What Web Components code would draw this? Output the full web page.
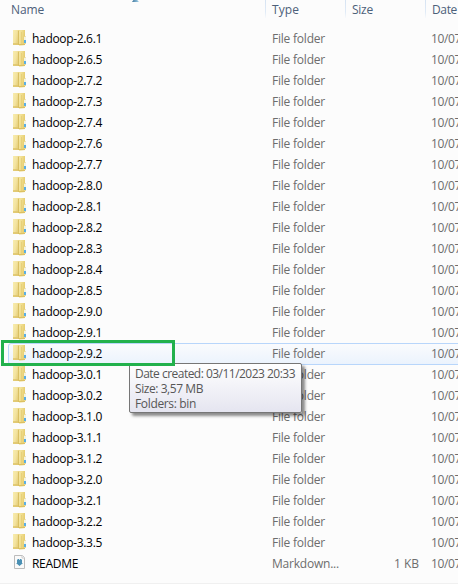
<!DOCTYPE html>
<html lang="en">
<head>
<meta charset="utf-8">
<title>Files</title>
<style>
html,body{margin:0;height:584px;overflow:hidden;background:#fcfcfc}
</style>
</head>
<body>
<file-explorer></file-explorer>
<script>
const make = (host, html) => {
  const t = document.createElement('template');
  t.innerHTML = html;
  host.attachShadow({mode:'open'}).append(t.content.cloneNode(true));
};

/* Text whose tracking is adjusted so that it fills the width given in "w". */
customElements.define('fit-text', class extends HTMLElement {
  constructor(){
    super();
    make(this, `<style>:host{display:inline-block;white-space:pre}span{display:inline-block}</style><span><slot></slot></span>`);
  }
  connectedCallback(){
    const s = this.shadowRoot.querySelector('span'), w = +this.getAttribute('w');
    const n = this.textContent.length;
    if (w) s.style.letterSpacing = ((w - s.getBoundingClientRect().width) / n) + 'px';
  }
});

customElements.define('folder-icon', class extends HTMLElement {
  constructor(){
    super();
    make(this, `<style>:host{display:block;width:14px;height:18px}svg{display:block}</style>
<svg width="14" height="18" viewBox="0 0 14 18">
<defs>
<linearGradient id="a" x2="1" y2=".6"><stop stop-color="#f8edae"/><stop offset=".6" stop-color="#f3e3a0"/><stop offset="1" stop-color="#e8d280"/></linearGradient>
<linearGradient id="b" x2="1" y2=".3"><stop stop-color="#f6e8a4"/><stop offset=".5" stop-color="#efdc8c"/><stop offset="1" stop-color="#e5cb6c"/></linearGradient>
</defs>
<path d="M0 2H12V17H0z" fill="#ead582"/>
<path d="M0 2H5V17H0z" fill="url(#a)"/>
<path d="M0 15H5V17H0z" fill="#dfc56c" opacity=".8"/>
<path d="M5 3H6V17H5z" fill="#d9bf62"/>
<path d="M6 3 7 2H12V17L6 17.8z" fill="url(#b)"/>
<path d="M8 4H9V16H8z" fill="#e7d07a"/>
<path d="M6 16H12V17H6z" fill="#dcc062"/>
<path d="M11 8H12.3L13 9V16H11z" fill="#e9d78f"/>
<path d="M11 9h2V12h-2z" fill="#f4f3e0"/>
<path d="M11 12H13V15H11z" fill="#5aaee4"/>
</svg>`);
  }
});

customElements.define('markdown-icon', class extends HTMLElement {
  constructor(){
    super();
    make(this, `<style>:host{display:block;width:14px;height:18px}svg{display:block}</style>
<svg width="14" height="18" viewBox="0 0 14 18">
<path d="M1.5 2.5H9.5L11.5 4.5V15.5H1.5z" fill="#fafafa" stroke="#bcbcbc"/>
<path d="M9 2.5V5H11.5" fill="#fff" stroke="#cacaca"/>
<path d="M4 6.6H5V6H6V6.8H7V6H8V6.6H9V10H10L6.5 13 3 10H4z" fill="#4a90b4"/>
</svg>`);
  }
});

customElements.define('column-header', class extends HTMLElement {
  constructor(){
    super();
    make(this, `<style>
:host{display:grid;grid-template-columns:265px 80px 80px 80px;height:28px;color:#4c607a}
div{height:18px;line-height:20px;border-right:1px solid;border-image:linear-gradient(#d5e3f2,#e0eaf6 65%,#fcfcfc) 1;box-sizing:border-box;width:81px;padding-left:7px}
div.first{width:266px;padding-left:11px}
div.last{border:0}
i{position:absolute;left:132px;top:0;width:7px;height:2px;background:linear-gradient(90deg,#41769b,#a4d4ed);clip-path:polygon(20% 0,75% 0,100% 100%,0 100%)}
</style>
<div class="first"><fit-text w="33">Name</fit-text></div><div><fit-text w="27">Type</fit-text></div><div><fit-text w="21">Size</fit-text></div><div class="last"><fit-text w="25">Date</fit-text></div><i></i>`);
  }
});

customElements.define('file-row', class extends HTMLElement {
  constructor(){
    super();
    const md = this.hasAttribute('readme');
    make(this, `<style>
:host{display:grid;grid-template-columns:19px 240px 80px 67px 12px 1fr;height:21px;padding-left:13px;line-height:22px;color:#6d6d6d;white-space:nowrap;box-sizing:border-box;position:relative}
:host([hover])::before{content:"";position:absolute;z-index:-1;left:8px;right:-4px;top:0;height:20px;border:1px solid #b8d6fb;border-radius:3px;background:linear-gradient(#fafbfd,#ebf3fd)}
.n{color:#000}.s{text-align:right}
</style>
${md?'<markdown-icon></markdown-icon>':'<folder-icon></folder-icon>'}
<span class="n"><slot></slot></span>
<span>${md?'<fit-text w="67">Markdown...</fit-text>':'<fit-text w="53">File folder</fit-text>'}</span>
<span class="s">${md?'<fit-text w="25">1 KB</fit-text>':''}</span><span></span>
<span><fit-text w="30">10/07</fit-text></span>`);
  }
});

customElements.define('file-tooltip', class extends HTMLElement {
  constructor(){
    super();
    make(this, `<style>
:host{position:absolute;left:129px;top:363px;width:173px;height:50px;box-sizing:border-box;border:1px solid #767676;border-radius:2px;background:linear-gradient(#fff,#e5e5f0);box-shadow:3px 3px 3px rgba(0,0,0,.45);padding:2px 0 0 5px;color:#575757;display:flex;flex-direction:column;line-height:15px}
</style><slot></slot>`);
  }
});

customElements.define('highlight-box', class extends HTMLElement {
  constructor(){
    super();
    make(this, `<style>:host{position:absolute;left:1px;top:340px;width:174px;height:26px;box-sizing:border-box;border:3px solid #22b14c}</style>`);
  }
});

customElements.define('file-explorer', class extends HTMLElement {
  constructor(){
    super();
    const v = '2.6.1 2.6.5 2.7.2 2.7.3 2.7.4 2.7.6 2.7.7 2.8.0 2.8.1 2.8.2 2.8.3 2.8.4 2.8.5 2.9.0 2.9.1 2.9.2 3.0.1 3.0.2 3.1.0 3.1.1 3.1.2 3.2.0 3.2.1 3.2.2 3.3.5'.split(' ');
    make(this, `<style>
:host{display:block;position:relative;z-index:0;width:458px;height:584px;overflow:hidden;background:#fcfcfc;font:12px "Open Sans","Noto Sans",sans-serif}
.edge{height:1px;margin-top:9px;background:#f0f0f0}
</style>
<column-header></column-header>
${v.map(x=>`<file-row${x==='2.9.2'?' hover':''}><fit-text w="70">hadoop-${x}</fit-text></file-row>`).join('')}
<file-row readme><fit-text w="46">README</fit-text></file-row>
<div class="edge"></div>
<file-tooltip><fit-text w="160">Date created: 03/11/2023 20:33</fit-text><fit-text w="68">Size: 3,57 MB</fit-text><fit-text w="61">Folders: bin</fit-text></file-tooltip>
<highlight-box></highlight-box>`);
  }
});
</script>
</body>
</html>
